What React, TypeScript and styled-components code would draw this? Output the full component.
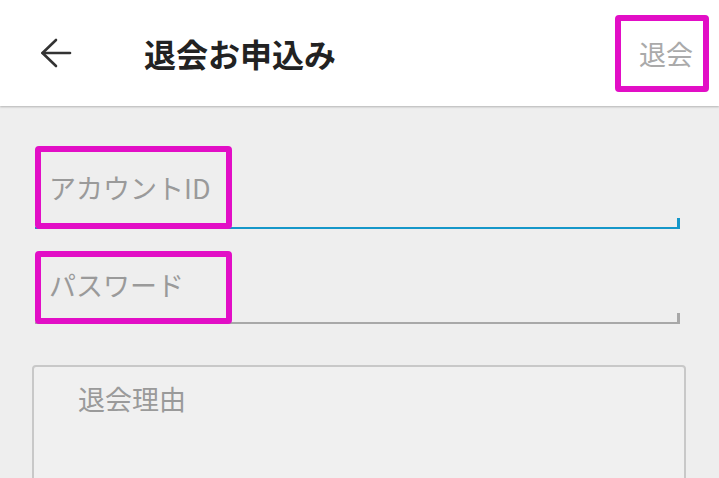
import styled, { createGlobalStyle } from "styled-components";

const GlobalStyle = createGlobalStyle`
  html, body {
    margin: 0;
    padding: 0;
    background: #eeeeee;
    font-family: "Noto Sans CJK JP", "Noto Sans", Roboto, sans-serif;
  }
  * { box-sizing: border-box; }
`;

const Toolbar = styled.header`
  height: 106px;
  background: #ffffff;
  box-shadow: 0 1px 2px rgba(0, 0, 0, 0.25);
  display: flex;
  align-items: center;
  padding: 0 10px 0 40px;
`;

const BackButton = styled.button`
  border: 0;
  padding: 0;
  background: none;
  width: 32px;
  height: 32px;
  display: flex;
  color: #333333;
`;

const Title = styled.h1`
  margin: 0 0 0 72px;
  font-size: 32px;
  font-weight: 700;
  color: #222222;
  line-height: 1;
`;

const Highlight = styled.div<{ $height: number; $pad?: string }>`
  border: 6px solid #e20ec6;
  border-radius: 4px;
  height: ${(p) => p.$height}px;
  display: flex;
  align-items: center;
  padding: ${(p) => p.$pad || "0"};
  position: relative;
`;

const ActionBox = styled(Highlight)`
  margin-left: auto;
`;

const Action = styled.span`
  font-size: 27px;
  color: #aaaaaa;
`;

const Form = styled.main`
  padding: 40px 39px 0 35px;
`;

const Field = styled.div<{ $focused?: boolean; $gap: number }>`
  position: relative;
  display: flex;
  align-items: flex-end;
  margin-bottom: ${(p) => p.$gap}px;
  border-bottom: 2px solid ${(p) => (p.$focused ? "#1597c9" : "#a8a8a8")};

  &::after {
    content: "";
    position: absolute;
    right: 0;
    bottom: 0;
    width: 3px;
    height: 9px;
    background: ${(p) => (p.$focused ? "#1597c9" : "#a8a8a8")};
  }

  & > ${Highlight} {
    width: 197px;
    margin-bottom: -2px;
  }
`;

const Label = styled.span`
  font-size: 27px;
  color: #9a9a9a;
  line-height: 1;
  white-space: nowrap;
`;

const Reason = styled.textarea`
  display: block;
  width: 654px;
  height: 160px;
  margin-left: -3px;
  border: 2px solid #c8c8c8;
  border-radius: 4px;
  background: #f0f0f0;
  padding: 13px 44px;
  font-family: inherit;
  font-size: 27px;
  line-height: 1.4;
  resize: none;
  outline: none;

  &::placeholder {
    color: #9a9a9a;
  }
`;

export default function App() {
  return (
    <>
      <GlobalStyle />
      <Toolbar>
        <BackButton aria-label="戻る">
          <svg width="32" height="32" viewBox="0 0 32 32" fill="none" stroke="currentColor" strokeWidth="2.6" strokeLinecap="round" strokeLinejoin="round">
            <path d="M30 16H2.5" />
            <path d="M16 3 L2.5 16 L16 29" />
          </svg>
        </BackButton>
        <Title>退会お申込み</Title>
        <ActionBox $height={77} $pad="0 10px 0 18px">
          <Action>退会</Action>
        </ActionBox>
      </Toolbar>
      <Form>
        <Field $focused $gap={22}>
          <Highlight $height={83} $pad="0 0 0 8px">
            <Label>アカウントID</Label>
          </Highlight>
        </Field>
        <Field $gap={41}>
          <Highlight $height={73} $pad="0 0 7px 8px">
            <Label>パスワード</Label>
          </Highlight>
        </Field>
        <Reason placeholder="退会理由" />
      </Form>
    </>
  );
}
